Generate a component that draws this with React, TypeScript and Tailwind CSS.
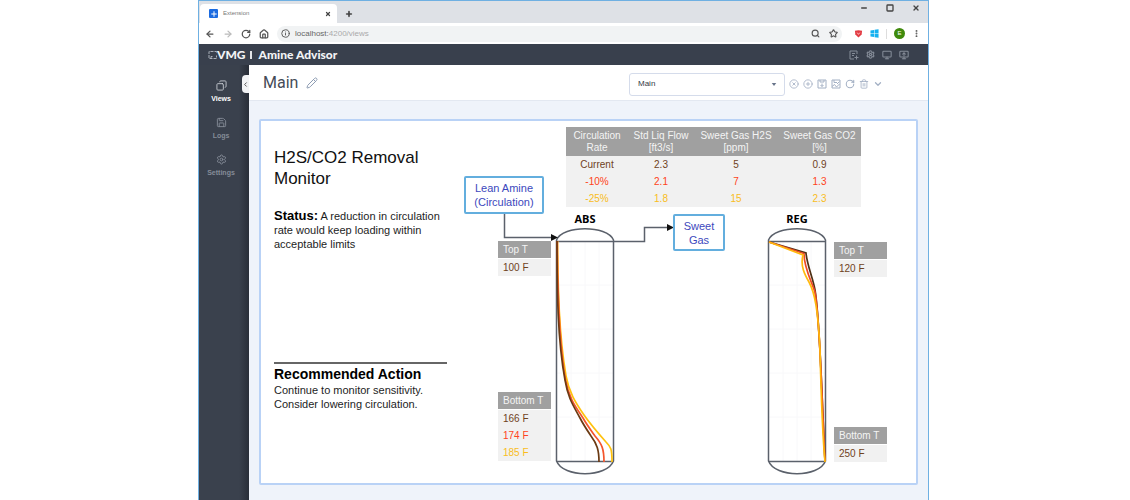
import {
  ArrowLeft, ArrowRight, ChevronDown, ChevronLeft, CirclePlus, CircleX, Copy, House, Info, Minus,
  Monitor, MonitorUp, MoreVertical, Pencil, Plus, RotateCw, Save, Search, Settings, Square, Star, Trash2, X,
} from "lucide-react";
import type { ReactNode } from "react";

const COLORS = { current: "text-[#6f421c]", ten: "text-[#ff4320]", quarter: "text-[#f9bd1c]" };

const RATES = [
  { label: "Current", color: COLORS.current, values: ["2.3", "5", "0.9"] },
  { label: "-10%", color: COLORS.ten, values: ["2.1", "7", "1.3"] },
  { label: "-25%", color: COLORS.quarter, values: ["1.8", "15", "2.3"] },
];

const HEADERS = [
  { title: "Circulation", unit: "Rate", width: "w-[62px]" },
  { title: "Std Liq Flow", unit: "[ft3/s]", width: "w-[66px]" },
  { title: "Sweet Gas H2S", unit: "[ppm]", width: "w-[84px]" },
  { title: "Sweet Gas CO2", unit: "[%]", width: "w-[83px]" },
];

function IconButton({ label, children }: { label: string; children: ReactNode }) {
  return (
    <button type="button" aria-label={label} className="flex items-center justify-center">
      {children}
    </button>
  );
}

function TabStrip() {
  return (
    <div className="flex h-[22px] items-end justify-between bg-[#dee1e6] pl-px">
      <div className="flex items-end">
        <div className="flex h-[19px] w-[137px] items-center rounded-t bg-white pl-[9px] pr-1.5">
          <span className="flex size-[9px] items-center justify-center rounded-[1px] bg-[#1b6be0] text-white">
            <Plus size={8} strokeWidth={3} />
          </span>
          <span className="ml-[5px] flex-1 text-[6px] text-[#777]">Extension</span>
          <IconButton label="Close tab"><X size={6} strokeWidth={5} className="text-[#444]" /></IconButton>
        </div>
        <div className="flex h-[19px] items-center pl-2">
          <IconButton label="New tab"><Plus size={8} strokeWidth={5} className="text-[#444]" /></IconButton>
        </div>
      </div>
      <div className="flex h-[22px] items-start gap-[18px] pr-2 pt-[3px] text-[#444]">
        <IconButton label="Minimize"><Minus size={8} strokeWidth={4} /></IconButton>
        <IconButton label="Maximize"><Square size={8} strokeWidth={4} /></IconButton>
        <IconButton label="Close"><X size={8} strokeWidth={4} /></IconButton>
      </div>
    </div>
  );
}

function AddressBar() {
  return (
    <div className="flex h-[21px] items-center bg-white pl-1.5 pr-[7px] text-[#555]">
      <div className="flex items-center gap-2">
        <IconButton label="Back"><ArrowLeft size={10} strokeWidth={3} /></IconButton>
        <IconButton label="Forward"><ArrowRight size={10} strokeWidth={3} className="text-[#bbb]" /></IconButton>
        <IconButton label="Reload"><RotateCw size={10} strokeWidth={3} /></IconButton>
        <IconButton label="Home"><House size={10} strokeWidth={3} /></IconButton>
      </div>
      <div className="ml-2 flex h-4 flex-1 items-center rounded-full bg-[#f1f3f4] pl-1 pr-1">
        <Info size={9} strokeWidth={2.5} />
        <span className="ml-[5px] flex-1 text-[8px] text-[#aaa]">
          <span className="text-[#666]">localhost:</span>4200/views
        </span>
        <div className="flex items-center gap-[9px]">
          <IconButton label="Zoom"><Search size={9} strokeWidth={3} /></IconButton>
          <IconButton label="Bookmark"><Star size={9} strokeWidth={3} /></IconButton>
        </div>
      </div>
      <div className="ml-3 flex items-center gap-[7px]">
        <svg viewBox="0 0 10 10" className="size-[9px]">
          <path d="M1 2Q5 .5 9 2L8.500 6L5 9.500L1.500 6Z" fill="#e23b43" />
          <path d="M3.500 4L5 6L6.500 4" fill="none" stroke="#ffc4c4" />
        </svg>
        <svg viewBox="0 0 10 10" className="size-[9px]" fill="#14b1f0">
          <path d="M.5 1.600L4.500 1V4.700H.5ZM5.100.9L9.500.2V4.700H5.100ZM.5 5.300H4.500V9L.5 8.400ZM5.100 5.300H9.500V9.800L5.100 9.100Z" />
        </svg>
        <span className="h-2.5 w-px bg-[#ddd]" />
        <button type="button" aria-label="Profile" className="flex size-[11px] items-center justify-center rounded-full bg-[#3f8a0c] text-[6px] text-white">
          E
        </button>
        <IconButton label="Menu"><MoreVertical size={9} strokeWidth={3} /></IconButton>
      </div>
    </div>
  );
}

function AppHeader() {
  return (
    <header className="flex h-[21px] items-center justify-between bg-[#39404d] pl-[9px] pr-[19px] text-[#f2f3f5]">
      <div className="flex items-center font-['Lato'] text-[12px] font-black leading-none">
        <svg viewBox="0 0 9 10" className="h-[10px] w-[9px]" fill="none" stroke="#aab0ba">
          <path d="M5.500 1.500H1V8.500H8.500V5.500M3 8V6.500H5M6.500 1.500H8.500V3.500" strokeDasharray="3 1" />
        </svg>
        <span>VMG</span>
        <span className="ml-1 h-2 w-[2px] bg-[#e4e6e9]" />
        <span className="ml-[7px]">Amine Advisor</span>
      </div>
      <div className="flex items-center gap-[7px] text-[#858c98]">
        <IconButton label="Edit layout">
          <svg viewBox="0 0 10 10" className="size-[10px]" fill="none" stroke="currentColor">
            <path d="M5 9H1V1H8V4M3 3.500H6M3 5.500H5M7.500 5.500V9.500M5.500 7.500H9.500" />
          </svg>
        </IconButton>
        <IconButton label="Preferences"><Settings size={9} strokeWidth={3} /></IconButton>
        <IconButton label="Display"><Monitor size={10} strokeWidth={2.5} /></IconButton>
        <IconButton label="Share display"><MonitorUp size={10} strokeWidth={2.5} /></IconButton>
      </div>
    </header>
  );
}

function Sidebar() {
  return (
    <nav className="relative flex w-[50px] shrink-0 flex-col gap-[15px] bg-linear-to-r from-[#3a414d] from-80% to-[#292e38] pr-1.5 pt-[15px]">
      <a href="#views" className="flex h-[22px] flex-col items-center justify-between text-[7px] font-bold leading-none text-white">
        <Copy size={11} className="-scale-x-100 text-[#c4c8cf]" />Views
      </a>
      <a href="#logs" className="flex h-[22px] flex-col items-center justify-between text-[7px] font-bold leading-none text-[#858c98]">
        <Save size={11} />Logs
      </a>
      <a href="#settings" className="flex h-[22px] flex-col items-center justify-between text-[7px] font-bold leading-none text-[#858c98]">
        <Settings size={11} />Settings
      </a>
      <button type="button" aria-label="Collapse sidebar" className="absolute right-0 top-[10px] flex h-[18px] w-[7px] items-center justify-center rounded-l-sm bg-[#f2f3f5] text-[#444]">
        <ChevronLeft size={7} strokeWidth={3} />
      </button>
    </nav>
  );
}

function ViewHeader() {
  return (
    <div className="flex h-9 items-center border-b border-[#e3e8f1] bg-white pl-[14px] pr-[45px]">
      <h1 className="font-['Roboto'] text-[16px] leading-none text-[#454b57]">Main</h1>
      <button type="button" aria-label="Rename view" className="ml-2 text-[#8c9bb2]"><Pencil size={12} strokeWidth={2} /></button>
      <div className="ml-auto flex items-center gap-1 pt-[3px] text-[#a3b0c4]">
        <div className="relative flex w-[156px] items-center">
          <select aria-label="View" className="h-[23px] w-full appearance-none rounded-[3px] border border-[#d5dceb] bg-white px-2 text-[8px] text-[#333a45]">
            <option>Main</option>
          </select>
          <svg viewBox="0 0 6 4" className="pointer-events-none absolute right-2 h-[3px] w-1.5" fill="#68748a">
            <path d="M0 0H6L3 4Z" />
          </svg>
        </div>
        <IconButton label="Remove"><CircleX size={10} strokeWidth={2} /></IconButton>
        <IconButton label="Add"><CirclePlus size={10} strokeWidth={2} /></IconButton>
        <IconButton label="Save">
          <svg viewBox="0 0 10 10" className="size-[10px]" fill="none" stroke="currentColor">
            <path d="M1 1H9V9H1ZM3 1V3H7V1M5 4.500V7.500M3.500 6L5 7.500L6.500 6" />
          </svg>
        </IconButton>
        <IconButton label="Save as">
          <svg viewBox="0 0 10 10" className="size-[10px]" fill="none" stroke="currentColor">
            <path d="M1 1H9V9H1ZM3 1V3.500H6M1 7.500L3.500 5.500L5.500 8L8.500 5M6 5L8.500 2.500" />
          </svg>
        </IconButton>
        <IconButton label="Refresh"><RotateCw size={10} strokeWidth={2.5} /></IconButton>
        <IconButton label="Delete"><Trash2 size={10} strokeWidth={2} /></IconButton>
        <IconButton label="More"><ChevronDown size={10} strokeWidth={3} /></IconButton>
      </div>
    </div>
  );
}

function Reading({ place, title, rows }: { place: string; title: string; rows: { text: string; color: string }[] }) {
  return (
    <div className={`absolute w-[53px] text-[10px] ${place}`}>
      <div className="h-[17px] bg-[#a0a0a0] pl-[5px] leading-[18px] text-[#f4f4f4]">{title}</div>
      <div className="mt-px bg-[#f1f1f1]">
        {rows.map((row) => (
          <div key={row.text} className={`h-[17px] pl-[5px] leading-[18px] ${row.color}`}>{row.text}</div>
        ))}
      </div>
    </div>
  );
}

function RateTable() {
  return (
    <table className="absolute left-[105px] top-[6px] w-[295px] table-fixed border-collapse text-center text-[10px]">
      <thead className="bg-[#a0a0a0] text-[#f4f4f4]">
        <tr>
          {HEADERS.map((h) => (
            <th key={h.title} scope="col" className={`h-[29px] p-0 font-normal leading-[12px] whitespace-nowrap ${h.width}`}>
              {h.title}<br />{h.unit}
            </th>
          ))}
        </tr>
      </thead>
      <tbody className="bg-[#f1f1f1]">
        {RATES.map((r) => (
          <tr key={r.label} className={r.color}>
            <th scope="row" className="h-[17px] p-0 font-normal leading-[17px]">{r.label}</th>
            {r.values.map((v) => <td key={v} className="p-0 leading-[17px]">{v}</td>)}
          </tr>
        ))}
      </tbody>
    </table>
  );
}

function Columns() {
  return (
    <svg viewBox="461 121 455 362" className="absolute left-0 top-0 h-[362px] w-[455px]" fill="none" strokeWidth="1.5">
      <path d="M571 242V461M585 242V461M599 242V461M557 285H614M557 329H614M557 373H614M557 417H614" stroke="#f8f8fa" strokeWidth="1" />
      <path d="M783 242V461M797 242V461M811 242V461M769 285H826M769 329H826M769 373H826M769 417H826" stroke="#f8f8fa" strokeWidth="1" />
      <g stroke="#5b616b">
        <path d="M556.500 461V240C563 225 607 225 613.500 240V461C607 478 563 478 556.500 461ZM556.500 461.500H613.500" />
        <path d="M768.500 461V240C775 225 819 225 825.500 240V461C819 478 775 478 768.500 461ZM768.500 241.500H825.500M768.500 461.500H825.500" />
        <path d="M504.500 213V237.500H552M557 241.500H644.500V227.500H667" />
      </g>
      <path d="M551 234L558 237.500L551 241ZM667 224L674 227.500L667 231Z" fill="#111" />
      <g strokeWidth="1.700">
        <path d="M557.500 241C558 290 559 335 566 376C569 392 575 402 584 415C591 425 598 433 606 442C611 447 612 449 612 462" stroke="#ffc20e" />
        <path d="M557.300 241C557.500 290 558.500 340 565.500 380C569 398 575 406 583 418C587 425 590 429 595 436C602 444 604 449 604 462" stroke="#f4552c" />
        <path d="M557 241C557 290 557.500 340 565 380C568 398 573 405 580 418C583 424 587 430 591 436C597 444 599 450 599 462" stroke="#6b3a13" />
        <path d="M769 242L806 253C807 265 813 278 815 290C820 320 821 380 825 461" stroke="#4f3014" />
        <path d="M769 242L804 253.500C804 268 811 280 815 292C820 320 821 380 825 461" stroke="#ee4a24" />
        <path d="M769 242L803 255C800 266 805 275 809 282C815 293 818 310 820 350C821 390 822 430 825 462" stroke="#ffb90d" />
      </g>
    </svg>
  );
}

function Diagram() {
  return (
    <section aria-label="Column diagram" className="relative h-[362px] w-[455px] shrink-0">
      <Columns />
      <RateTable />
      <div className="absolute left-[3px] top-[55px] flex h-[38px] w-[80px] items-center justify-center rounded-[2px] border-2 border-[#63aede] bg-white text-center text-[11px] leading-[14px] text-[#3c48bd]">
        Lean Amine<br />(Circulation)
      </div>
      <div className="absolute left-[212px] top-[93px] flex h-[37px] w-[52px] items-center justify-center rounded-[2px] border-2 border-[#63aede] bg-white text-center text-[11px] leading-[14px] text-[#3c48bd]">
        Sweet<br />Gas
      </div>
      <h3 className="absolute left-[104px] top-[91px] w-10 text-center font-['Open_Sans'] text-[11px] font-bold leading-[14px] text-black">ABS</h3>
      <h3 className="absolute left-[316px] top-[91px] w-10 text-center font-['Open_Sans'] text-[11px] font-bold leading-[14px] text-black">REG</h3>
      <Reading place="left-[37px] top-[120px]" title="Top T" rows={[{ text: "100 F", color: COLORS.current }]} />
      <Reading
        place="left-[37px] top-[271px]"
        title="Bottom T"
        rows={[
          { text: "166 F", color: COLORS.current },
          { text: "174 F", color: COLORS.ten },
          { text: "185 F", color: COLORS.quarter },
        ]}
      />
      <Reading place="left-[373px] top-[121px]" title="Top T" rows={[{ text: "120 F", color: COLORS.current }]} />
      <Reading place="left-[373px] top-[306px]" title="Bottom T" rows={[{ text: "250 F", color: COLORS.current }]} />
    </section>
  );
}

function Summary() {
  return (
    <section className="flex min-w-[200px] flex-1 flex-col pl-[13px] pr-[14px] pt-[26px] text-[11px] leading-[14px] text-[#1d1d1d]">
      <h2 className="text-[17px] leading-[21px] text-[#111]">H2S/CO2 Removal Monitor</h2>
      <p className="mt-5">
        <strong className="text-[13px] text-black">Status:</strong> A reduction in circulation rate would keep loading within acceptable limits
      </p>
      <div className="mt-auto mb-[72px] border-t-2 border-[#666] pt-0.5">
        <h2 className="text-[14px] font-bold leading-[17px] text-black">Recommended Action</h2>
        <p>Continue to monitor sensitivity.</p>
        <p>Consider lowering circulation.</p>
      </div>
    </section>
  );
}

export default function App() {
  return (
    <div className="min-h-screen bg-white pl-[198px] pr-[201px] font-['Liberation_Sans',sans-serif]">
      <div className="flex min-h-screen flex-col border-x border-t border-[#6fb0e2]">
        <TabStrip />
        <AddressBar />
        <AppHeader />
        <div className="flex flex-1">
          <Sidebar />
          <main className="flex min-w-0 flex-1 flex-col bg-[#eff3fa]">
            <ViewHeader />
            <div className="px-[10px] pb-[15px] pt-[18px]">
              <div className="flex rounded-[2px] border-2 border-[#b9d2f6] bg-white">
                <Summary />
                <Diagram />
              </div>
            </div>
          </main>
        </div>
      </div>
    </div>
  );
}
